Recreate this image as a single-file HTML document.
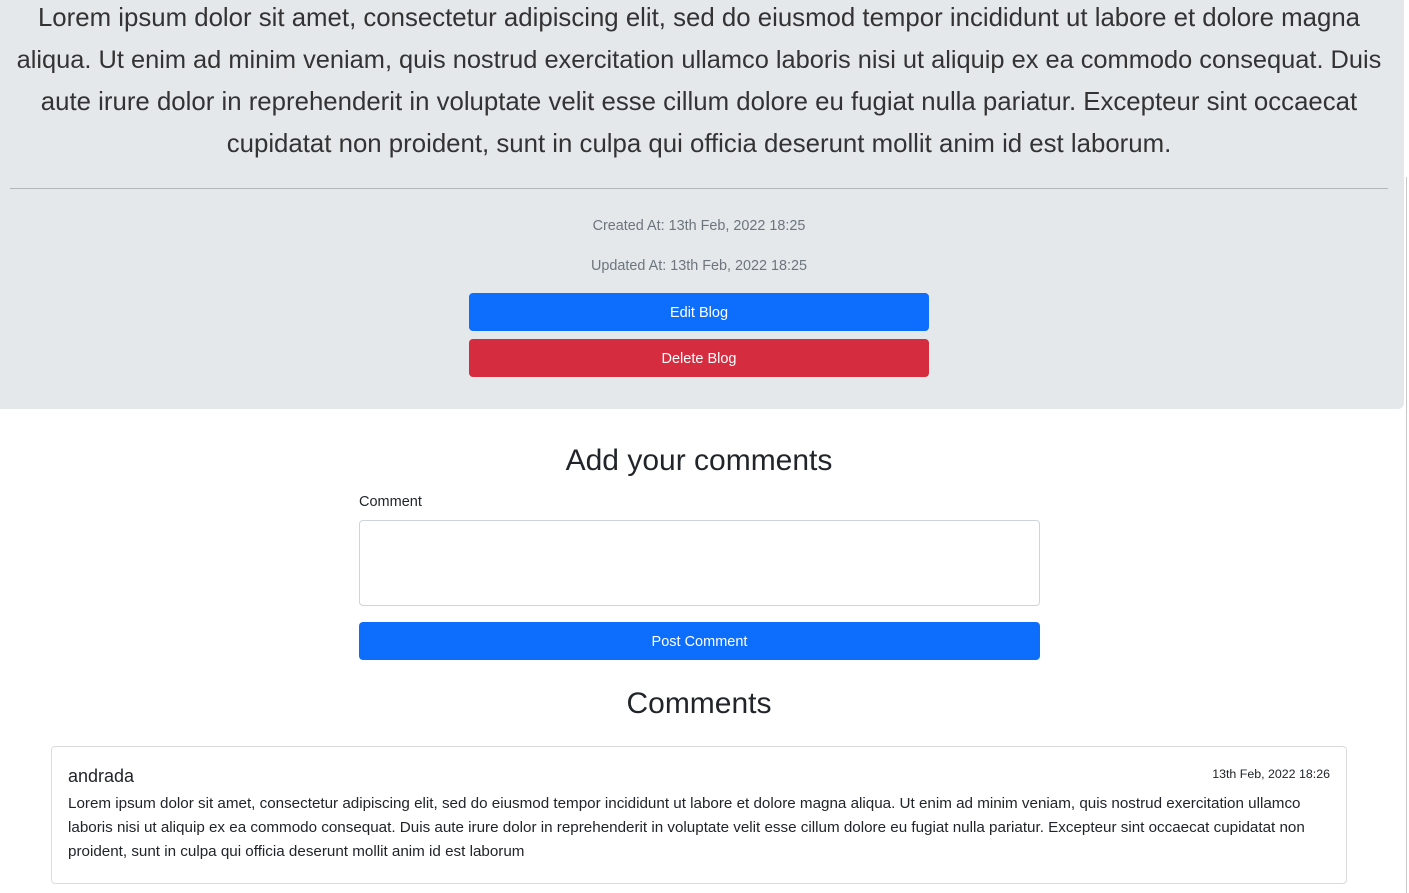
<!DOCTYPE html>
<html><head><meta charset="utf-8"><style>
*{margin:0;padding:0;box-sizing:border-box}
body{width:1409px;height:893px;background:#fff;font-family:"Liberation Sans",sans-serif;color:#212529;position:relative;overflow:hidden}
.a{position:absolute}
.jumbo{left:0;top:0;width:1404px;height:409px;background:#e5e8eb;border-bottom-right-radius:6px}
.lead{left:0;width:1398px;text-align:center;font-size:25.8px;font-weight:300;color:#333;white-space:nowrap;line-height:42px}
.c{text-align:center;width:1398px;left:0;white-space:nowrap}
.btn{color:#fff;text-align:center;border-radius:4px;font-size:14.5px;line-height:40px}
</style></head><body>
<div class="a jumbo"></div>
<div class="a lead" style="top:-3px">Lorem ipsum dolor sit amet, consectetur adipiscing elit, sed do eiusmod tempor incididunt ut labore et dolore magna<br><span style="font-size:25.4px">aliqua. Ut enim ad minim veniam, quis nostrud exercitation ullamco laboris nisi ut aliquip ex ea commodo consequat. Duis</span><br>aute irure dolor in reprehenderit in voluptate velit esse cillum dolore eu fugiat nulla pariatur. Excepteur sint occaecat<br>cupidatat non proident, sunt in culpa qui officia deserunt mollit anim id est laborum.</div>
<div class="a" style="left:10px;top:188px;width:1378px;height:1px;background:#b4b7ba"></div>
<div class="a c" style="top:218px;font-size:14.4px;color:#6c757d">Created At: 13th Feb, 2022 18:25</div>
<div class="a c" style="top:258px;font-size:14.4px;color:#6c757d">Updated At: 13th Feb, 2022 18:25</div>
<div class="a btn" style="left:469px;top:293px;width:460px;height:38px;background:#0d6efd">Edit Blog</div>
<div class="a btn" style="left:469px;top:339px;width:460px;height:38px;background:#d52d3f">Delete Blog</div>
<div class="a" style="left:1406px;top:177px;width:1px;height:716px;background:#c8c8c8"></div>
<div class="a c" style="top:444px;font-size:30px">Add your comments</div>
<div class="a" style="left:359px;top:494px;font-size:14.5px">Comment</div>
<div class="a" style="left:359px;top:520px;width:681px;height:86px;border:1px solid #ced4da;border-radius:4px"></div>
<div class="a btn" style="left:359px;top:622px;width:681px;height:38px;background:#0d6efd">Post Comment</div>
<div class="a c" style="top:687px;font-size:30px">Comments</div>
<div class="a" style="left:51px;top:746px;width:1296px;height:138px;border:1px solid #dcdcdc;border-radius:4px"></div>
<div class="a" style="left:68px;top:766px;font-size:18px">andrada</div>
<div class="a" style="left:1180px;width:150px;text-align:right;top:767px;font-size:12.4px">13th Feb, 2022 18:26</div>
<div class="a" style="left:68px;top:792px;font-size:15.2px;line-height:24px;white-space:nowrap">Lorem ipsum dolor sit amet, consectetur adipiscing elit, sed do eiusmod tempor incididunt ut labore et dolore magna aliqua. Ut enim ad minim veniam, quis nostrud exercitation ullamco<br>laboris nisi ut aliquip ex ea commodo consequat. Duis aute irure dolor in reprehenderit in voluptate velit esse cillum dolore eu fugiat nulla pariatur. Excepteur sint occaecat cupidatat non<br>proident, sunt in culpa qui officia deserunt mollit anim id est laborum</div>
</body></html>
